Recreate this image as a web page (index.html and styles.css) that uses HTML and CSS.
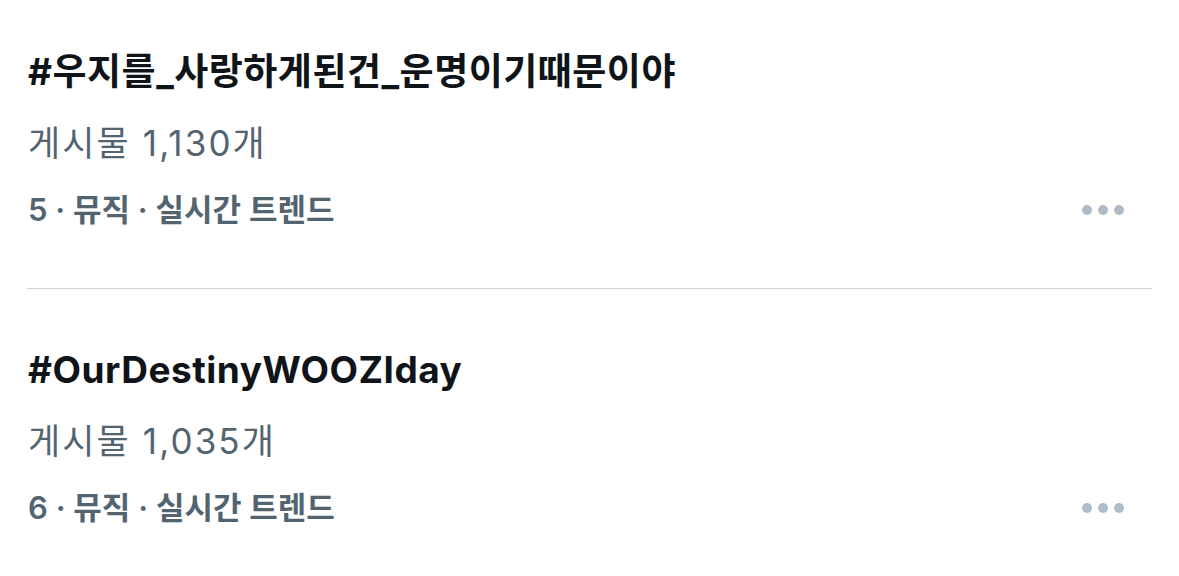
FILE: index.html
```html
<!DOCTYPE html>
<html lang="ko">
<head>
<meta charset="utf-8">
<link rel="stylesheet" href="styles.css">
</head>
<body>
<div class="list">
  <div class="trend first">
    <div class="title">#우지를_사랑하게된건_운명이기때문이야</div>
    <div class="count">게시물 1,130개</div>
    <div class="meta">
      <span>5 · 뮤직 · 실시간 트렌드</span>
      <span class="more"><i></i><i></i><i></i></span>
    </div>
  </div>
  <div class="trend">
    <div class="title">#OurDestinyWOOZIday</div>
    <div class="count">게시물 1,035개</div>
    <div class="meta">
      <span>6 · 뮤직 · 실시간 트렌드</span>
      <span class="more"><i></i><i></i><i></i></span>
    </div>
  </div>
</div>
</body>
</html>
```
FILE: styles.css
```css
html, body {
  margin: 0;
  padding: 0;
  background: #ffffff;
}
body {
  font-family: Inter, "Noto Sans CJK KR", sans-serif;
  width: 1179px;
  height: 576px;
  overflow: hidden;
}
.list {
  display: flex;
  flex-direction: column;
}
.trend {
  display: flex;
  flex-direction: column;
  gap: 23px;
  margin: 0 27px;
  padding: 57px 28px 0 1px;
}
.trend.first {
  padding-top: 48px;
  padding-bottom: 58px;
  border-bottom: 1px solid #cfd4d8;
}
.title {
  font-size: 37px;
  line-height: 48px;
  font-weight: 700;
  letter-spacing: 0.5px;
  color: #0f1419;
}
.count {
  font-size: 35px;
  line-height: 48px;
  font-weight: 400;
  letter-spacing: 2.1px;
  color: #536471;
}
.meta {
  display: flex;
  justify-content: space-between;
  align-items: center;
  font-size: 31px;
  line-height: 40px;
  font-weight: 600;
  letter-spacing: 0px;
  color: #536471;
}
.more {
  display: flex;
  gap: 6px;
  padding-right: 0;
}
.more i {
  width: 10px;
  height: 10px;
  border-radius: 50%;
  background: #aebbc6;
}
```
